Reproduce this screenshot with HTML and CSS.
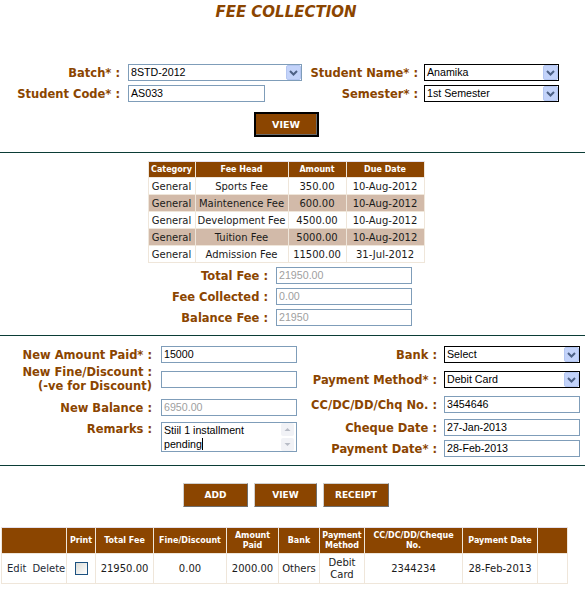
FILE: index.html
```html
<!DOCTYPE html>
<html>
<head>
<meta charset="utf-8">
<title>Fee Collection</title>
<link rel="stylesheet" href="styles.css">
</head>
<body>
<div class="page">
  <h1 class="title">FEE COLLECTION</h1>

  <div class="topform">
    <label class="lbl l1">Batch* :</label>
    <div class="sel sel-blue w174"><span>8STD-2012</span><span class="arrow"><svg viewBox="0 0 15 15" width="15" height="15"><rect x="0.5" y="0.5" width="14" height="14" rx="1.5" fill="#c3d3fa" stroke="#b4c6f1"/><path d="M4 6 L7.5 9.5 L11 6" fill="none" stroke="#4d6185" stroke-width="2"/></svg></span></div>
    <label class="lbl l2">Student Name* :</label>
    <div class="sel w135"><span>Anamika</span><span class="arrow"><svg viewBox="0 0 15 15" width="15" height="15"><rect x="0.5" y="0.5" width="14" height="14" rx="1.5" fill="#c3d3fa" stroke="#b4c6f1"/><path d="M4 6 L7.5 9.5 L11 6" fill="none" stroke="#4d6185" stroke-width="2"/></svg></span></div>

    <label class="lbl l1">Student Code* :</label>
    <div class="inp w137">AS033</div>
    <label class="lbl l2">Semester* :</label>
    <div class="sel w135"><span>1st Semester</span><span class="arrow"><svg viewBox="0 0 15 15" width="15" height="15"><rect x="0.5" y="0.5" width="14" height="14" rx="1.5" fill="#c3d3fa" stroke="#b4c6f1"/><path d="M4 6 L7.5 9.5 L11 6" fill="none" stroke="#4d6185" stroke-width="2"/></svg></span></div>
  </div>

  <div class="btnrow1"><button class="btn-dark">VIEW</button></div>

  <div class="sep sep1"></div>

  <table class="feetable">
    <colgroup><col class="fc1"><col class="fc2"><col class="fc3"><col class="fc4"></colgroup>
    <thead>
      <tr><th>Category</th><th>Fee Head</th><th>Amount</th><th>Due Date</th></tr>
    </thead>
    <tbody>
      <tr><td>General</td><td>Sports Fee</td><td>350.00</td><td>10-Aug-2012</td></tr>
      <tr class="alt"><td>General</td><td>Maintenence Fee</td><td>600.00</td><td>10-Aug-2012</td></tr>
      <tr><td>General</td><td>Development Fee</td><td>4500.00</td><td>10-Aug-2012</td></tr>
      <tr class="alt"><td>General</td><td>Tuition Fee</td><td>5000.00</td><td>10-Aug-2012</td></tr>
      <tr><td>General</td><td>Admission Fee</td><td>11500.00</td><td>31-Jul-2012</td></tr>
    </tbody>
  </table>

  <div class="totals">
    <label class="lbl">Total Fee :</label>
    <div class="inp dis w136">21950.00</div>
    <label class="lbl">Fee Collected :</label>
    <div class="inp dis w136">0.00</div>
    <label class="lbl">Balance Fee :</label>
    <div class="inp dis w136">21950</div>
  </div>

  <div class="sep sep2"></div>

  <div class="lower">
    <div class="lcol">
      <div class="frow">
        <label class="lbl llab">New Amount Paid* :</label>
        <div class="inp w136">15000</div>
      </div>
      <div class="frow r-fine">
        <label class="lbl llab two"><span class="ln">New Fine/Discount :</span><span class="ln">(-ve for Discount)</span></label>
        <div class="inp w136"></div>
      </div>
      <div class="frow r-bal">
        <label class="lbl llab">New Balance :</label>
        <div class="inp dis w136">6950.00</div>
      </div>
      <div class="frow r-rem top">
        <label class="lbl llab">Remarks :</label>
        <div class="remarks">
          <div class="rtext">Stiil 1 installment<br>pending<span class="caret"></span></div>
          <div class="sbar">
            <span class="sbtn"><svg viewBox="0 0 13 13" width="13" height="13"><path d="M3.5 8 L6.5 5 L9.5 8 Z" fill="#b8bcc6"/></svg></span>
            <span class="sbtn"><svg viewBox="0 0 13 13" width="13" height="13"><path d="M3.5 5 L6.5 8 L9.5 5 Z" fill="#b8bcc6"/></svg></span>
          </div>
        </div>
      </div>
    </div>
    <div class="rcol">
      <div class="frow">
        <label class="lbl rlab">Bank :</label>
        <div class="sel w136"><span>Select</span><span class="arrow"><svg viewBox="0 0 15 15" width="15" height="15"><rect x="0.5" y="0.5" width="14" height="14" rx="1.5" fill="#c3d3fa" stroke="#b4c6f1"/><path d="M4 6 L7.5 9.5 L11 6" fill="none" stroke="#4d6185" stroke-width="2"/></svg></span></div>
      </div>
      <div class="frow r-pm">
        <label class="lbl rlab">Payment Method* :</label>
        <div class="sel w136"><span>Debit Card</span><span class="arrow"><svg viewBox="0 0 15 15" width="15" height="15"><rect x="0.5" y="0.5" width="14" height="14" rx="1.5" fill="#c3d3fa" stroke="#b4c6f1"/><path d="M4 6 L7.5 9.5 L11 6" fill="none" stroke="#4d6185" stroke-width="2"/></svg></span></div>
      </div>
      <div class="frow r-cc">
        <label class="lbl rlab">CC/DC/DD/Chq No. :</label>
        <div class="inp w136">3454646</div>
      </div>
      <div class="frow r-cd">
        <label class="lbl rlab">Cheque Date :</label>
        <div class="inp w136">27-Jan-2013</div>
      </div>
      <div class="frow r-pd">
        <label class="lbl rlab">Payment Date* :</label>
        <div class="inp w136">28-Feb-2013</div>
      </div>
    </div>
  </div>

  <div class="sep sep3"></div>

  <div class="btnrow2">
    <button class="btn b-add">ADD</button>
    <button class="btn b-view">VIEW</button>
    <button class="btn b-rec">RECEIPT</button>
  </div>

  <table class="paytable">
    <colgroup>
      <col class="p1"><col class="p2"><col class="p3"><col class="p4"><col class="p5">
      <col class="p6"><col class="p7"><col class="p8"><col class="p9"><col class="p10">
    </colgroup>
    <thead>
      <tr>
        <th></th><th>Print</th><th>Total Fee</th><th>Fine/Discount</th><th>Amount<br>Paid</th>
        <th>Bank</th><th>Payment<br>Method</th><th>CC/DC/DD/Cheque<br>No.</th><th>Payment Date</th><th></th>
      </tr>
    </thead>
    <tbody>
      <tr>
        <td class="acts"><a href="#">Edit</a><a href="#" class="del">Delete</a></td>
        <td><span class="chk"></span></td>
        <td>21950.00</td>
        <td>0.00</td>
        <td>2000.00</td>
        <td>Others</td>
        <td>Debit<br>Card</td>
        <td>2344234</td>
        <td>28-Feb-2013</td>
        <td></td>
      </tr>
    </tbody>
  </table>
</div>
</body>
</html>
```

FILE: styles.css
```css
* { box-sizing: border-box; }

body {
  margin: 0;
  background: #ffffff;
  color: #1a1a1a;
  font-family: "DejaVu Sans", Verdana, sans-serif;
}

.page {
  width: 572px;
}

.title {
  margin: 0;
  height: 24px;
  line-height: 24px;
  text-align: center;
  font-size: 15px;
  font-weight: bold;
  font-style: italic;
  color: #8b4500;
}

.lbl {
  color: #8b4500;
  font-weight: bold;
  font-size: 11.5px;
  text-align: right;
  white-space: nowrap;
}

/* inputs */
.inp, .sel {
  height: 17px;
  border: 1px solid #7f9db9;
  background: #fff;
  font-family: "Liberation Sans", Arial, sans-serif;
  font-size: 10.67px;
  line-height: 15px;
  padding: 0 2px;
  color: #000;
  white-space: nowrap;
  overflow: hidden;
}
.inp.dis { color: #a0a0a0; }

.sel {
  position: relative;
  border-color: #000;
}
.sel-blue { border-color: #7f9db9; }
.sel .arrow {
  position: absolute;
  right: 0;
  top: 0;
  width: 15px;
  height: 15px;
}
.sel .arrow svg { display: block; }

.w174 { width: 174px; }
.w137 { width: 137px; }
.w136 { width: 136px; }
.w135 { width: 135px; }

/* top form */
.topform {
  margin-top: 40px;
  display: grid;
  grid-template-columns: 128px 174px 122px 135px;
  grid-template-rows: 17px 17px;
  row-gap: 4px;
  align-items: center;
}
.topform .l1 { padding-right: 8px; }
.topform .l2 { padding-right: 6px; }

.btnrow1 {
  margin-top: 10px;
  display: flex;
  justify-content: center;
}
.btn-dark {
  width: 65px;
  height: 25px;
  border: 2px solid #000;
  box-shadow: inset -1px -1px 0 #6b6b6b;
  background: #8b4500;
  color: #fff;
  font-family: "DejaVu Sans", Verdana, sans-serif;
  font-weight: bold;
  font-size: 9.5px;
  padding: 0;
}

.sep {
  width: 585px;
  height: 1px;
  background: #0b3d36;
}
.sep1 { margin-top: 15px; }
.sep2 { margin-top: 9px; }
.sep3 { margin-top: 8px; }

/* fee table */
.feetable {
  margin: 8px auto 0;
  border-collapse: collapse;
  table-layout: fixed;
  width: 276px;
  border: 1px solid #e4e0ee;
  font-size: 10px;
}
.fc1 { width: 47px; }
.fc2 { width: 93px; }
.fc3 { width: 58px; }
.fc4 { width: 78px; }
.feetable th {
  background: #8b4500;
  color: #fff;
  font-size: 8px;
  font-weight: bold;
  height: 16px;
  padding: 0;
  border: 1px solid #efe6da;
  border-top: 0;
}
.feetable td {
  height: 17px;
  padding: 0;
  text-align: center;
  white-space: nowrap;
  border: 1px solid #efe6da;
  color: #1a1a1a;
}
.feetable tr.alt td { background: #d2baa9; }

/* totals */
.totals {
  margin-top: 4px;
  display: grid;
  grid-template-columns: 268px 136px;
  column-gap: 8px;
  grid-auto-rows: 17px;
  row-gap: 4px;
  align-items: center;
}

/* lower form */
.lower {
  margin-top: 10px;
  display: flex;
}
.lcol { width: 297px; }
.rcol { width: 283px; }
.frow {
  display: flex;
  align-items: center;
}
.frow.top { align-items: flex-start; }
.llab { width: 152px; margin-right: 9px; }
.rlab { width: 140px; margin-right: 7px; }
.two {
  display: flex;
  flex-direction: column;
  align-items: flex-end;
  line-height: 13.5px;
}
.two .ln { display: block; }
.r-fine { margin-top: 3px; }
.r-bal { margin-top: 6px; }
.r-rem { margin-top: 6px; }
.r-pm { margin-top: 8px; }
.r-cc { margin-top: 8px; }
.r-cd { margin-top: 6px; }
.r-pd { margin-top: 4px; }

.remarks {
  width: 136px;
  height: 30px;
  border: 1px solid #7f9db9;
  display: flex;
  background: #fff;
}
.rtext {
  flex: 1;
  font-family: "Liberation Sans", Arial, sans-serif;
  font-size: 10.67px;
  line-height: 14px;
  padding: 0 2px;
  color: #000;
  white-space: nowrap;
}
.caret {
  display: inline-block;
  width: 1px;
  height: 12px;
  background: #000;
  vertical-align: -2px;
}
.sbar {
  width: 15px;
  display: flex;
  flex-direction: column;
  justify-content: space-between;
  padding: 0 1px 0 0;
}
.sbtn {
  width: 13px;
  height: 13px;
  background: #f1f2f6;
  border-radius: 2px;
  display: block;
}
.sbtn svg { display: block; }

/* action buttons */
.btnrow2 {
  margin-top: 17px;
  display: flex;
  justify-content: center;
  gap: 6px;
}
.btn {
  height: 24px;
  background: #8b4500;
  color: #fff;
  border: 1px solid;
  border-color: #cfcfcf #6e6e6e #6e6e6e #cfcfcf;
  font-family: "DejaVu Sans", Verdana, sans-serif;
  font-weight: bold;
  font-size: 9px;
  padding: 0;
}
.b-add { width: 65px; }
.b-view { width: 63px; }
.b-rec { width: 66px; }

/* payments table */
.paytable {
  margin: 20px 0 0 1px;
  border-collapse: collapse;
  table-layout: fixed;
  width: 566px;
  border: 1px solid #e4e0ee;
  font-size: 10px;
}
.p1 { width: 65px; }
.p2 { width: 29px; }
.p3 { width: 58px; }
.p4 { width: 73px; }
.p5 { width: 52px; }
.p6 { width: 41px; }
.p7 { width: 45px; }
.p8 { width: 98px; }
.p9 { width: 75px; }
.p10 { width: 30px; }
.paytable th {
  background: #8b4500;
  color: #fff;
  font-size: 8px;
  font-weight: bold;
  line-height: 10px;
  height: 26px;
  padding: 0;
  border: 1px solid #efe6da;
  border-top: 0;
  white-space: nowrap;
}
.paytable td {
  height: 30px;
  padding: 0;
  text-align: center;
  white-space: nowrap;
  line-height: 12px;
  border: 1px solid #efe6da;
  color: #1a1a1a;
}
.paytable td.acts { text-align: left; padding-left: 5px; }
.acts a { color: #1e2a36; text-decoration: none; }
.acts .del { margin-left: 6px; }
.chk {
  display: inline-block;
  width: 13px;
  height: 13px;
  border: 1px solid #1c5180;
  background: linear-gradient(135deg, #dcdcd7, #ffffff);
  vertical-align: middle;
}
```
